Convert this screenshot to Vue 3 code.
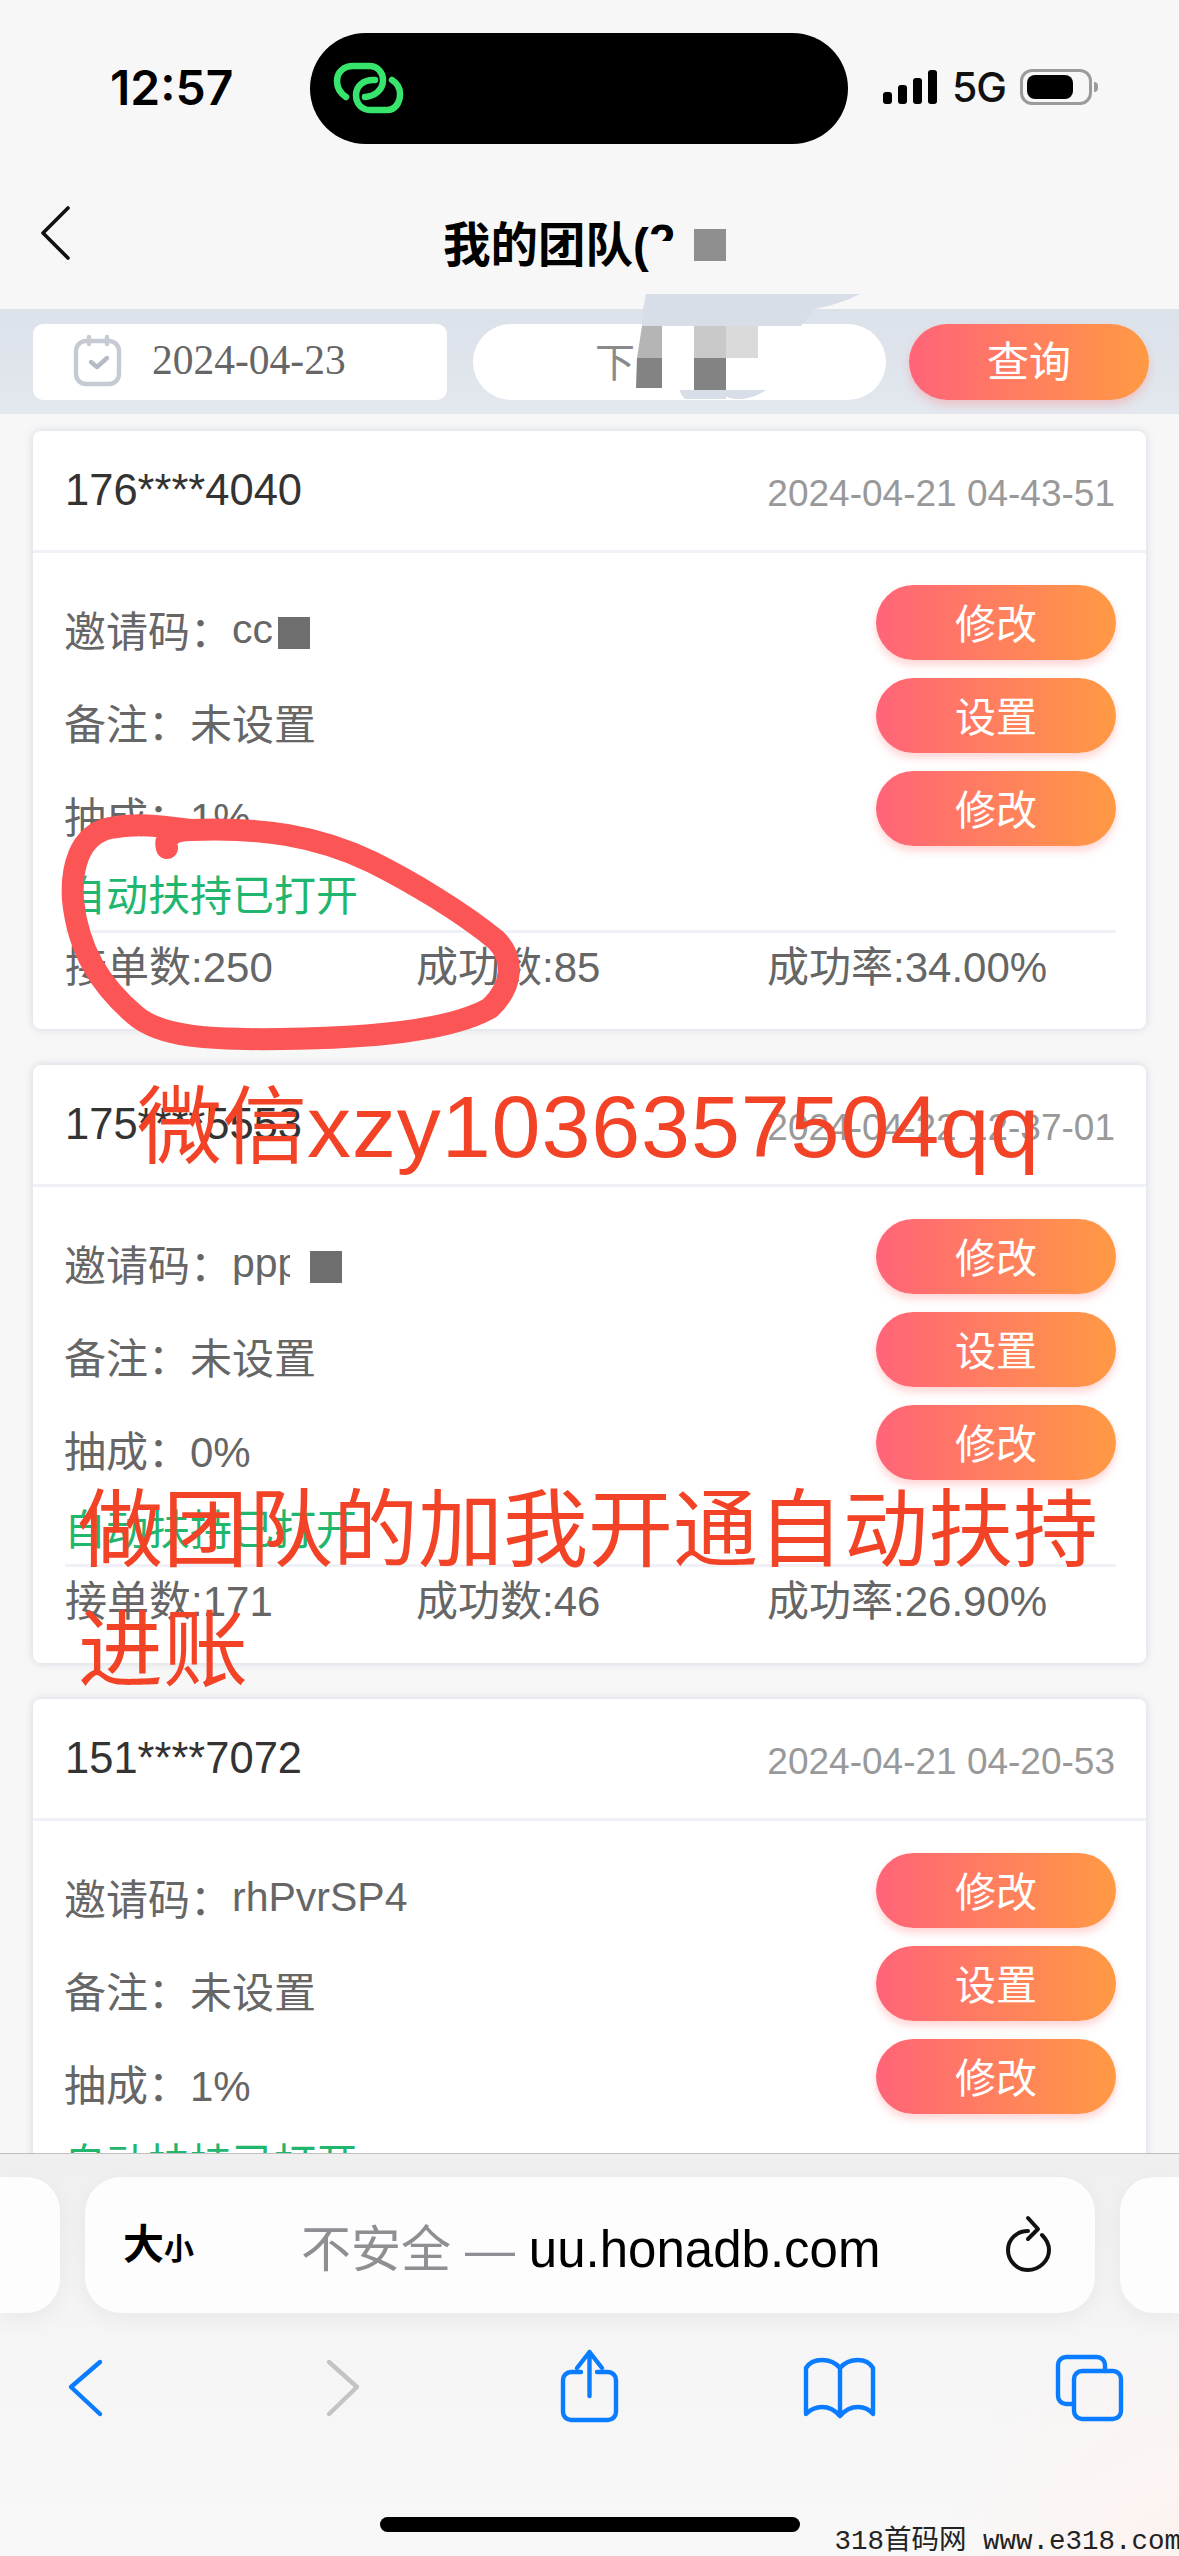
<script setup>
const members = [
  { phone: '176****4040', time: '2024-04-21 04-43-51', code: 'cc', codeWidth: 46, maskGap: 0, fee: '1%', orders: 250, done: 85, rate: '34.00%' },
  { phone: '175****5553', time: '2024-04-22 12-37-01', code: 'ppp', codeWidth: 58, maskGap: 20, fee: '0%', orders: 171, done: 46, rate: '26.90%' },
  { phone: '151****7072', time: '2024-04-21 04-20-53', code: 'rhPvrSP4', fee: '1%', orders: 0, done: 0, rate: '0.00%' }
]
</script>

<template>
  <div class="phone">
    <header class="status">
      <span class="clock">12:57</span>
      <div class="island">
        <svg class="link" width="100" height="80" viewBox="0 0 100 80" fill="none" stroke="#38e56c" stroke-width="6.5" stroke-linecap="round">
          <path d="M26 47C20 43 17 37 17 31C17 22 24 16 33 16H49C58 16 63 23 63 30C63 40 55 46 45 47" />
          <path d="M55 30C44 29 36 36 36 45C36 54 42 60 50 60H67C75 60 80 53 80 44C80 38 77 33 72 30" />
        </svg>
      </div>
      <div class="indicators">
        <div class="bars"><i class="b1"></i><i class="b2"></i><i class="b3"></i><i class="b4"></i></div>
        <span class="net">5G</span>
        <div class="battery"><i></i></div>
        <div class="nub"></div>
      </div>
    </header>

    <nav class="nav">
      <svg class="back" width="34" height="54" viewBox="0 0 34 54" fill="none" stroke="#111" stroke-width="3.6" stroke-linecap="round" stroke-linejoin="round">
        <path d="M29 2L4 27L29 52" />
      </svg>
      <h1 class="title"><span>我的团队(</span><span class="cut">2</span><i class="title-mask"></i></h1>
    </nav>

    <section class="filter">
      <div class="date-box">
        <svg width="56" height="56" viewBox="0 0 56 56" fill="none" stroke="#c5cad3" stroke-width="4.4" stroke-linecap="round" stroke-linejoin="round">
          <rect x="7" y="7" width="43" height="43" rx="10" />
          <path d="M20 3V10M38 3V10" />
          <path d="M22 28L28 33L38 24" stroke="#b6bcc7" />
        </svg>
        <span>2024-04-23</span>
      </div>
      <div class="select-box">下</div>
      <button class="pill query">查询</button>
    </section>

    <main class="list">
      <article v-for="m in members" :key="m.phone" class="card">
        <div class="card-head">
          <span class="mobile">{{ m.phone }}</span>
          <span class="stamp">{{ m.time }}</span>
        </div>
        <div class="card-body">
          <div class="info">
            <div class="row">
              邀请码：<span class="code" :style="m.codeWidth ? { width: m.codeWidth + 'px' } : null">{{ m.code }}</span>
              <i v-if="m.codeWidth" class="mask" :style="{ marginLeft: m.maskGap + 'px' }"></i>
            </div>
            <div class="row">备注：未设置</div>
            <div class="row">抽成：{{ m.fee }}</div>
          </div>
          <div class="actions">
            <button class="pill act">修改</button>
            <button class="pill act">设置</button>
            <button class="pill act">修改</button>
          </div>
        </div>
        <div class="auto">自动扶持已打开</div>
        <div class="stats">
          <span>接单数:{{ m.orders }}</span>
          <span>成功数:{{ m.done }}</span>
          <span>成功率:{{ m.rate }}</span>
        </div>
      </article>
    </main>

    <svg class="marks" width="1179" height="2556" viewBox="0 0 1179 2556" fill="none">
      <path d="M167 848C164 838 172 830 190 830C262 827 318 836 372 862C412 882 462 912 496 940C514 958 514 985 490 1008C450 1031 370 1038 280 1039C210 1040 160 1037 135 1015C100 985 78 950 73 900C71 870 78 835 110 828C130 824 150 824 190 830" stroke="#fb5555" stroke-width="22" stroke-linecap="round" stroke-linejoin="round" />
      <path d="M646 294H860C846 301 830 306 815 309L801 326H642L643 309Z" fill="#d7dee7" />
      <path d="M642 326H662V358H637Z" fill="#b5b5b5" />
      <path d="M637 358H662V388H636Z" fill="#838383" />
      <rect x="694" y="326" width="32" height="32" fill="#c9c9c9" />
      <rect x="726" y="326" width="32" height="32" fill="#dadada" />
      <rect x="694" y="358" width="32" height="32" fill="#838383" />
      <path d="M680 390H766C758 396 745 399 740 399C733 399 727 398 726 396V399H685C682 396 680 393 680 390Z" fill="#d7dee7" />
    </svg>

    <div class="scrawl line1">微信<span class="latin">xzy1036357504qq</span></div>
    <div class="scrawl line2">做团队的加我开通自动扶持</div>
    <div class="scrawl line3">进账</div>

    <footer class="browser">
      <div class="url-row">
        <div class="tab-peek left"></div>
        <div class="url">
          <span class="aa"><b>大</b><b class="small">小</b></span>
          <span class="addr"><span class="insecure">不安全 — </span>uu.honadb.com</span>
          <svg class="reload" width="48" height="58" viewBox="0 0 48 58" fill="none" stroke="#111" stroke-width="4" stroke-linecap="round" stroke-linejoin="round">
            <path d="M24 16C13 16 4 24 4 35C4 46 13 55 24 55C35 55 45 46 45 35C45 29 42 24 38 20" />
            <path d="M24 3L34 14L24 24" />
          </svg>
        </div>
        <div class="tab-peek right"></div>
      </div>
      <div class="tools">
        <svg width="80" height="80" viewBox="0 0 80 80" fill="none" stroke="#0a7cff" stroke-width="4.4" stroke-linecap="round" stroke-linejoin="round">
          <path d="M53 16L24 41L53 68" />
        </svg>
        <svg width="80" height="80" viewBox="0 0 80 80" fill="none" stroke="#c4c4c4" stroke-width="4.4" stroke-linecap="round" stroke-linejoin="round">
          <path d="M32 16L60 41L32 68" />
        </svg>
        <svg width="80" height="80" viewBox="0 0 80 80" fill="none" stroke="#0a7cff" stroke-width="4.4" stroke-linecap="round" stroke-linejoin="round">
          <path d="M34 26H24A8 8 0 0 0 16 34V66A8 8 0 0 0 24 74H61A8 8 0 0 0 69 66V34A8 8 0 0 0 61 26H50" />
          <path d="M42.5 50V6M30 22L42.5 6L55 22" />
        </svg>
        <svg width="80" height="80" viewBox="0 0 80 80" fill="none" stroke="#0a7cff" stroke-width="4.4" stroke-linecap="round" stroke-linejoin="round">
          <path d="M43 22C38 16 31 14 25 14C18 14 12 17 9 22V68C14 63 18 61 25 61C33 61 38 64 43 70C48 64 53 61 61 61C68 61 72 63 76 68V22C73 17 67 14 61 14C55 14 48 16 43 22V68" />
        </svg>
        <svg width="80" height="80" viewBox="0 0 80 80" fill="none" stroke="#0a7cff" stroke-width="4.4" stroke-linecap="round" stroke-linejoin="round">
          <path d="M27 58H19A8 8 0 0 1 11 50V19A8 8 0 0 1 19 11H50A8 8 0 0 1 58 19V25" />
          <rect x="27" y="25" width="47" height="48" rx="8" />
        </svg>
      </div>
      <div class="home"></div>
    </footer>

    <div class="watermark">318首码网 www.e318.com</div>
  </div>
</template>

<style scoped>
.phone {
  position: relative;
  width: 1179px;
  height: 2556px;
  overflow: hidden;
  background: #f7f7f7;
  font-family: "Liberation Sans", "Noto Sans CJK SC", sans-serif;
  color: #666;
}

.status {
  display: grid;
  grid-template-columns: 310px 538px 1fr;
  align-items: start;
  height: 165px;
  padding-top: 33px;
  box-sizing: border-box;
}
.clock {
  padding: 27px 0 0 110px;
  font: 600 48px/56px Inter, sans-serif;
  color: #000;
}
.island {
  height: 111px;
  background: #000;
  border-radius: 56px;
}
.link { display: block; margin: 17px 0 0 10px; }
.indicators {
  display: flex;
  align-items: center;
  height: 36px;
  margin-top: 36px;
  padding-left: 35px;
}
.bars { display: flex; align-items: flex-end; gap: 6px; height: 34px; }
.bars i { display: block; width: 9px; background: #000; border-radius: 3px; }
.b1 { height: 12px; }
.b2 { height: 19px; }
.b3 { height: 26px; }
.b4 { height: 34px; }
.net {
  margin-left: 15px;
  font: 500 41px/36px Inter, sans-serif;
  color: #111;
  letter-spacing: -1px;
}
.battery {
  width: 72px;
  height: 36px;
  margin-left: 14px;
  padding: 3px 16px 3px 4px;
  box-sizing: border-box;
  border: 3px solid #9b9b9b;
  border-radius: 12px;
}
.battery i { display: block; width: 100%; height: 100%; background: #000; border-radius: 8px; }
.nub { width: 4px; height: 10px; margin-left: 2px; background: #9b9b9b; border-radius: 0 4px 4px 0; }

.nav {
  position: relative;
  height: 144px;
  display: flex;
  justify-content: center;
}
.back { position: absolute; left: 39px; top: 41px; }
.title {
  display: flex;
  align-items: center;
  height: 152px;
  margin: 0 0 0 -10px;
  font-size: 47.5px;
  font-weight: 700;
  color: #000;
}
.cut { display: inline-block; width: 45px; clip-path: inset(0 0 50% 0); }
.title-mask { display: block; width: 32px; height: 32px; margin: 8px 0 0 0; background: #8f8f8f; }

.filter {
  display: flex;
  align-items: center;
  height: 105px;
  padding-left: 33px;
  box-sizing: border-box;
  background: linear-gradient(#dce2ea, #e3e7ee);
}
.date-box {
  display: flex;
  align-items: center;
  gap: 27px;
  width: 414px;
  height: 76px;
  padding-left: 36px;
  box-sizing: border-box;
  background: #fff;
  border-radius: 10px;
  font: 41.5px "Liberation Serif", serif;
  color: #666;
}
.date-box span { margin-top: -3px; }
.select-box {
  width: 413px;
  height: 76px;
  margin-left: 26px;
  padding-left: 122px;
  box-sizing: border-box;
  background: #fff;
  border-radius: 38px;
  font: 40px/72px "Noto Sans CJK SC", sans-serif;
  color: #8a8a8a;
}
.pill {
  display: block;
  border: 0;
  padding: 0 0 3px;
  color: #fff;
  background: linear-gradient(90deg, #ff6478, #ff9a44);
  box-shadow: 0 5px 9px rgba(255, 120, 120, 0.32);
  font-family: "Noto Sans CJK SC", sans-serif;
}
.query {
  width: 240px;
  height: 76px;
  margin-left: 23px;
  border-radius: 38px;
  font-size: 42px;
  padding-bottom: 6px;
}

.list { padding: 17px 33px 0; display: flex; flex-direction: column; gap: 36px; }
.card {
  flex: none;
  height: 598px;
  background: #fff;
  border-radius: 8px;
  box-shadow: 0 0 8px rgba(185, 193, 212, 0.6);
}
.card-head {
  display: flex;
  justify-content: space-between;
  align-items: center;
  height: 122px;
  padding: 0 31px 0 32px;
  box-sizing: border-box;
  border-bottom: 3px solid #eff1f6;
}
.mobile { font-size: 43.5px; color: #333; }
.stamp { font-size: 37px; color: #999; margin-top: 6px; }
.card-body {
  display: flex;
  justify-content: space-between;
  padding: 32px 30px 0 31px;
}
.info { font-size: 42px; margin-top: -3px; }
.row { display: flex; align-items: center; height: 93px; }
.code { display: inline-block; overflow: hidden; line-height: 60px; font-size: 41px; }
.mask { display: block; width: 32px; height: 32px; margin-top: 8px; background: #6e6e6e; }
.actions { display: flex; flex-direction: column; gap: 18px; }
.act { width: 240px; height: 75px; border-radius: 38px; font-size: 41px; }
.auto {
  height: 69px;
  margin-left: 31px;
  line-height: 72px;
  font-size: 42px;
  color: #21b66e;
}
.stats {
  display: grid;
  grid-template-columns: repeat(3, 351px);
  margin: 0 30px 0 32px;
  padding-top: 5px;
  border-top: 3px solid #eff1f6;
  font-size: 42px;
  line-height: 60px;
}

.marks { position: absolute; left: 0; top: 0; pointer-events: none; }
.scrawl {
  position: absolute;
  font: 400 85px/100px "Noto Sans CJK SC", sans-serif;
  color: #f34327;
  white-space: nowrap;
}
.line1 { left: 137px; top: 1070px; }
.latin { font-family: "Liberation Sans", sans-serif; letter-spacing: 0.9px; font-size: 88px; }
.line2 { left: 78px; top: 1473px; }
.line3 { left: 78px; top: 1593px; }

.browser {
  position: absolute;
  left: 0;
  right: 0;
  bottom: 0;
  height: 403px;
  box-sizing: border-box;
  border-top: 1px solid #bfbfbf;
  background:
    radial-gradient(circle at 100% 100%, #fdf3f0 0, rgba(253, 243, 240, 0) 240px),
    linear-gradient(#efefef, #f5f5f5 45%, #f8f8f8);
}
.url-row {
  display: flex;
  justify-content: space-between;
  height: 136px;
  margin-top: 23px;
}
.tab-peek { width: 60px; background: #fdfdfd; box-shadow: 0 6px 22px rgba(0, 0, 0, 0.05); }
.tab-peek.left { border-radius: 0 34px 34px 0; }
.tab-peek.right { width: 59px; border-radius: 34px 0 0 34px; }
.url {
  position: relative;
  display: flex;
  align-items: center;
  width: 1010px;
  box-sizing: border-box;
  padding-left: 38px;
  background: #fdfdfd;
  border-radius: 36px;
  box-shadow: 0 6px 22px rgba(0, 0, 0, 0.05);
}
.aa { display: flex; align-items: baseline; width: 178px; color: #000; font-size: 41px; line-height: 1; }
.aa b { font-weight: 700; }
.aa .small { font-size: 30px; }
.addr { font-size: 51px; color: #000; white-space: nowrap; }
.insecure { color: #8e8e93; font-size: 50px; }
.reload { position: absolute; left: 919px; top: 38px; }
.tools {
  display: flex;
  justify-content: space-between;
  width: 1080px;
  margin: 33px 0 0 47px;
}
.home {
  width: 420px;
  height: 15px;
  margin: 91px 0 0 380px;
  background: #000;
  border-radius: 8px;
}
.watermark {
  position: absolute;
  right: -2px;
  bottom: -2px;
  font: 27.5px/32px "Liberation Mono", "Noto Sans CJK SC", monospace;
  color: #222;
  white-space: nowrap;
}
</style>
